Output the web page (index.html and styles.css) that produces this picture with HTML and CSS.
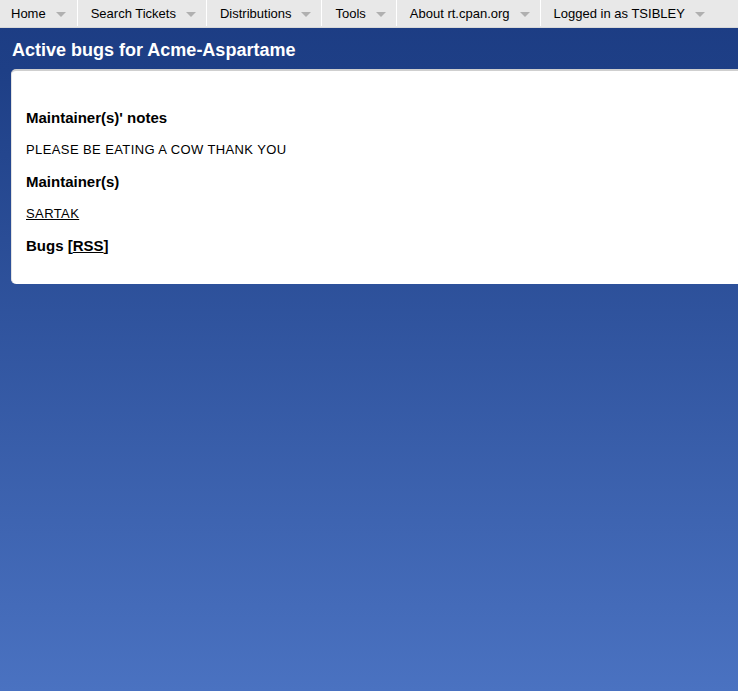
FILE: index.html
```html
<!DOCTYPE html>
<html>
<head>
<meta charset="utf-8">
<title>Active bugs for Acme-Aspartame</title>
<link rel="stylesheet" href="styles.css">
</head>
<body>
<nav class="menu">
  <div class="item first"><span>Home</span><i class="arrow"></i></div>
  <div class="item"><span>Search Tickets</span><i class="arrow"></i></div>
  <div class="item"><span>Distributions</span><i class="arrow"></i></div>
  <div class="item"><span>Tools</span><i class="arrow"></i></div>
  <div class="item"><span>About rt.cpan.org</span><i class="arrow"></i></div>
  <div class="item"><span>Logged in as TSIBLEY</span><i class="arrow"></i></div>
</nav>
<h1 class="title">Active bugs for Acme-Aspartame</h1>
<main class="card">
  <h2 class="heading">Maintainer(s)' notes</h2>
  <p class="text">PLEASE BE EATING A COW THANK YOU</p>
  <h2 class="heading">Maintainer(s)</h2>
  <p class="text"><a href="#" class="link">SARTAK</a></p>
  <h2 class="heading">Bugs [<a href="#" class="link">RSS</a>]</h2>
</main>
</body>
</html>
```
FILE: styles.css
```css
html, body {
  margin: 0;
  padding: 0;
}
body {
  min-height: 691px;
  font-family: "Liberation Sans", Arial, sans-serif;
  background: linear-gradient(to bottom, #1c3c83 0px, #1e3f86 70px, #4a72c1 691px);
  overflow: hidden;
}
.menu {
  display: flex;
  height: 28px;
  background: #e8e8e8;
  border-bottom: 1px solid #d8d8d8;
  box-sizing: border-box;
}
.item {
  display: flex;
  align-items: center;
  height: 26px;
  padding: 0 10px 0 13px;
  border-left: 1px solid #ffffff;
  font-size: 13px;
  color: #000;
}
.item.first {
  padding-left: 11px;
  padding-right: 11px;
  border-left: 0;
}
.arrow {
  display: block;
  width: 0;
  height: 0;
  margin-left: 10px;
  margin-top: 2px;
  border-left: 5px solid transparent;
  border-right: 5px solid transparent;
  border-top: 5px solid #b0b0b0;
}
.title {
  margin: 0;
  padding: 11px 12px 0 12px;
  height: 30px;
  font-size: 18px;
  font-weight: bold;
  color: #fff;
  line-height: 22px;
}
.card {
  margin-left: 11px;
  background: #fff;
  border-top: 2px solid #cfcfcf;
  border-left: 1px solid #e2e2e2;
  border-radius: 5px 0 0 5px;
  padding: 37px 15px 28px 14px;
}
.heading {
  margin: 0;
  font-size: 15px;
  font-weight: bold;
  line-height: 20px;
  color: #000;
}
.text {
  margin: 14px 0;
  font-size: 13px;
  line-height: 16px;
  letter-spacing: 0.4px;
  color: #000;
}
.link {
  color: #000;
  text-decoration: underline;
}
```
